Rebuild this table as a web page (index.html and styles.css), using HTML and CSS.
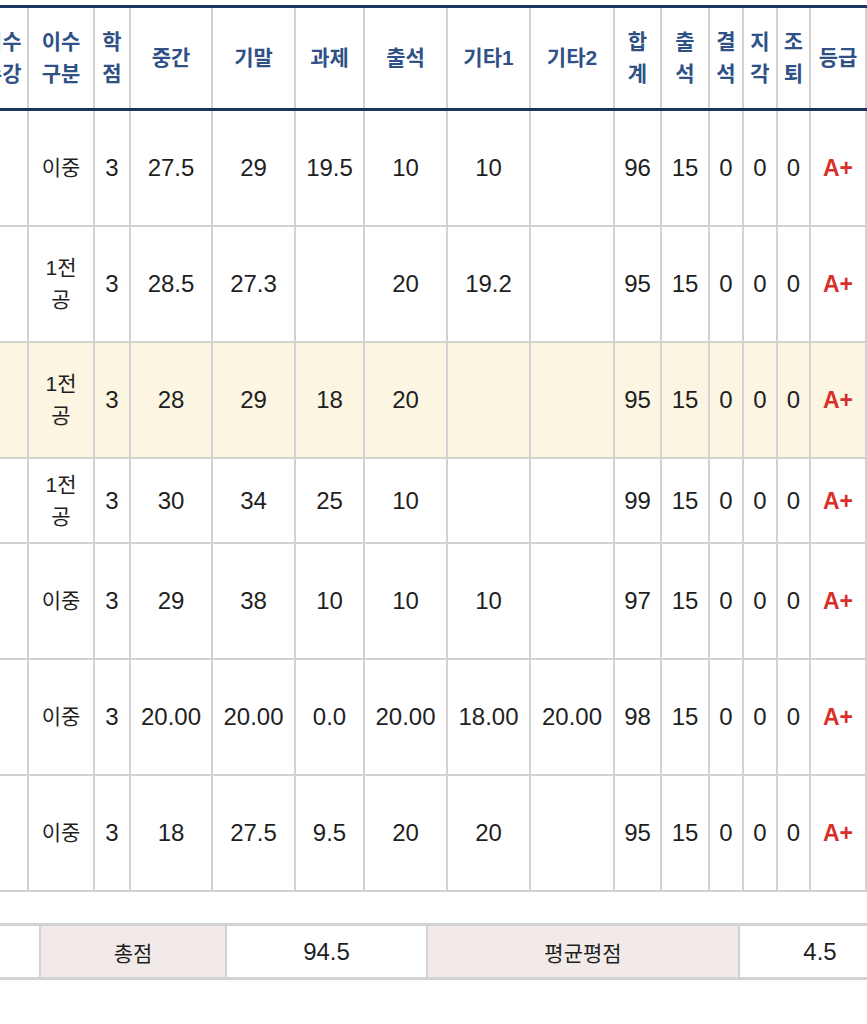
FILE: index.html
```html
<!DOCTYPE html>
<html lang="ko">
<head>
<meta charset="utf-8">
<title>성적 조회</title>
<link rel="stylesheet" href="styles.css">
</head>
<body>
<div class="viewport">
  <table class="grades">
    <colgroup>
      <col class="c-hidden"><col class="c-type"><col class="c-credit"><col class="c-score"><col class="c-score2"><col class="c-task"><col class="c-score2"><col class="c-score2"><col class="c-etc2"><col class="c-sum"><col class="c-att"><col class="c-small"><col class="c-small"><col class="c-small2"><col class="c-grade"><col class="c-extra">
    </colgroup>
    <thead>
      <tr>
        <th>재이수<br>재수강</th><th>이수<br>구분</th><th>학<br>점</th><th>중간</th><th>기말</th><th>과제</th><th>출석</th><th>기타1</th><th>기타2</th><th>합<br>계</th><th>출<br>석</th><th>결<br>석</th><th>지<br>각</th><th>조<br>퇴</th><th>등급</th><th></th>
      </tr>
    </thead>
    <tbody>
      <tr class="r-tall">
        <td></td><td class="ko">이중</td><td>3</td><td>27.5</td><td>29</td><td>19.5</td><td>10</td><td>10</td><td></td><td>96</td><td>15</td><td>0</td><td>0</td><td>0</td><td class="grade">A+</td><td></td>
      </tr>
      <tr class="r-tall">
        <td></td><td class="ko">1전<br>공</td><td>3</td><td>28.5</td><td>27.3</td><td></td><td>20</td><td>19.2</td><td></td><td>95</td><td>15</td><td>0</td><td>0</td><td>0</td><td class="grade">A+</td><td></td>
      </tr>
      <tr class="r-tall hl">
        <td></td><td class="ko">1전<br>공</td><td>3</td><td>28</td><td>29</td><td>18</td><td>20</td><td></td><td></td><td>95</td><td>15</td><td>0</td><td>0</td><td>0</td><td class="grade">A+</td><td></td>
      </tr>
      <tr class="r-short">
        <td></td><td class="ko">1전<br>공</td><td>3</td><td>30</td><td>34</td><td>25</td><td>10</td><td></td><td></td><td>99</td><td>15</td><td>0</td><td>0</td><td>0</td><td class="grade">A+</td><td></td>
      </tr>
      <tr class="r-tall">
        <td></td><td class="ko">이중</td><td>3</td><td>29</td><td>38</td><td>10</td><td>10</td><td>10</td><td></td><td>97</td><td>15</td><td>0</td><td>0</td><td>0</td><td class="grade">A+</td><td></td>
      </tr>
      <tr class="r-tall">
        <td></td><td class="ko">이중</td><td>3</td><td>20.00</td><td>20.00</td><td>0.0</td><td>20.00</td><td>18.00</td><td>20.00</td><td>98</td><td>15</td><td>0</td><td>0</td><td>0</td><td class="grade">A+</td><td></td>
      </tr>
      <tr class="r-tall">
        <td></td><td class="ko">이중</td><td>3</td><td>18</td><td>27.5</td><td>9.5</td><td>20</td><td>20</td><td></td><td>95</td><td>15</td><td>0</td><td>0</td><td>0</td><td class="grade">A+</td><td></td>
      </tr>
    </tbody>
  </table>

  <table class="summary">
    <colgroup>
      <col class="s-lead"><col class="s-label1"><col class="s-val1"><col class="s-label2"><col class="s-val2">
    </colgroup>
    <tr>
      <td></td>
      <td class="label">총점</td>
      <td>94.5</td>
      <td class="label">평균평점</td>
      <td>4.5</td>
    </tr>
  </table>
</div>
</body>
</html>
```

FILE: styles.css
```css
html, body {
  margin: 0;
  padding: 0;
  background: #ffffff;
  overflow: hidden;
}

.viewport {
  width: 867px;
  overflow: hidden;
  padding-top: 5px;
  font-family: "Liberation Sans", "Noto Sans CJK KR", sans-serif;
  color: #1f1f1f;
}

.grades {
  border-collapse: collapse;
  table-layout: fixed;
  width: 969px;
  margin-left: -44px;
  font-size: 24px;
  line-height: 32px;
}

.c-hidden { width: 71px; }
.c-type { width: 66px; }
.c-credit { width: 36px; }
.c-score { width: 82px; }
.c-score2 { width: 83px; }
.c-task { width: 69px; }
.c-etc2 { width: 84px; }
.c-sum { width: 47px; }
.c-att { width: 48px; }
.c-small { width: 34px; }
.c-small2 { width: 33px; }
.c-grade { width: 56px; }
.c-extra { width: 60px; }

.grades th,
.grades td {
  border: 2px solid #d2d2d2;
  text-align: center;
  vertical-align: middle;
  padding: 0;
  white-space: nowrap;
}

.grades thead th {
  height: 100px;
  border-top: 3px solid #1d3461;
  border-bottom: 3px solid #1d3461;
  color: #2f5186;
  font-weight: 700;
  font-size: 21px;
}

.grades .r-tall td { height: 114px; }
.grades .r-short td { height: 83px; }

.grades .ko { font-size: 21px; }

.grades .hl td { background: #fbf5e2; }

.grades .grade {
  color: #d9312a;
  font-weight: 700;
  font-size: 23px;
}

.summary {
  border-collapse: collapse;
  table-layout: fixed;
  width: 961px;
  margin-left: -61px;
  margin-top: 31px;
  font-size: 24px;
}

.s-lead { width: 100px; }
.s-label1 { width: 186px; }
.s-val1 { width: 201px; }
.s-label2 { width: 312px; }
.s-val2 { width: 162px; }

.summary td {
  height: 51px;
  border: 2px solid #d2d2d2;
  border-top-width: 3px;
  border-bottom-width: 3px;
  text-align: center;
  vertical-align: middle;
  padding: 0;
}

.summary .label {
  background: #f1eae8;
  font-size: 21px;
}
```
